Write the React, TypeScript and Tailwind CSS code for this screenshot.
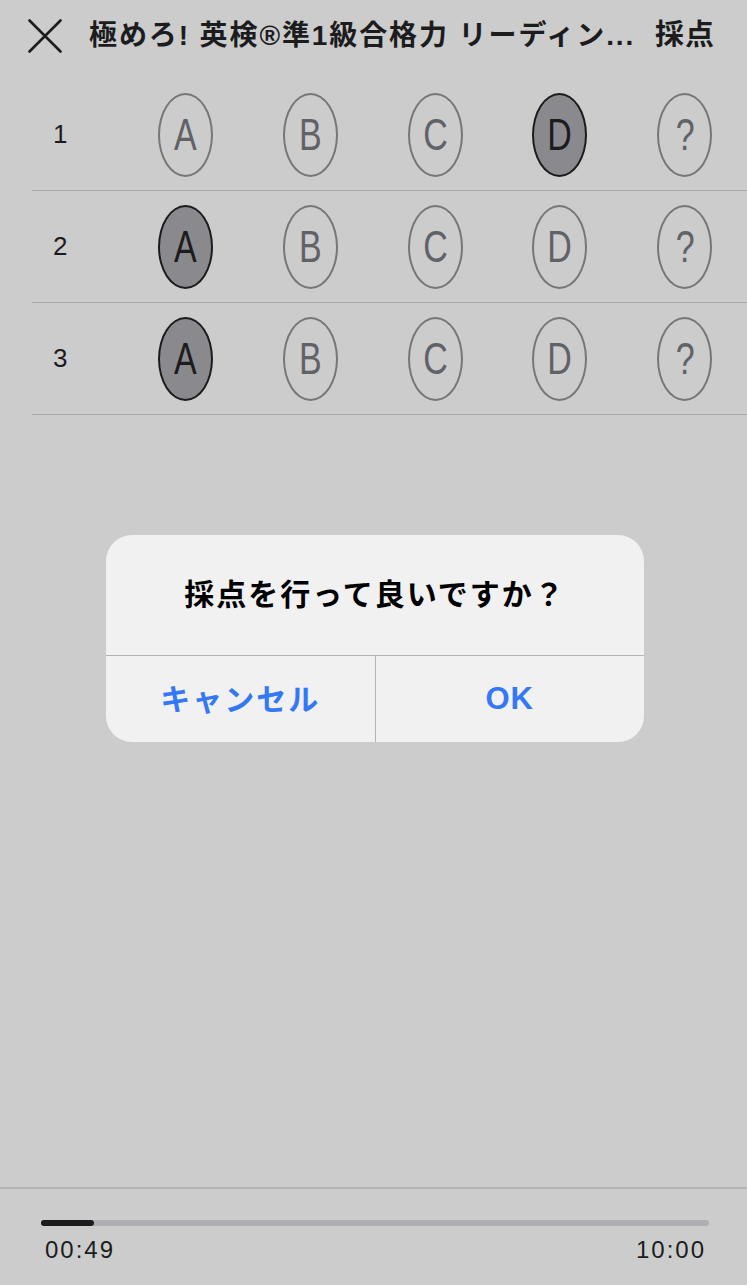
const rows: { n: number; pick: string }[] = [
  { n: 1, pick: "D" },
  { n: 2, pick: "A" },
  { n: 3, pick: "A" },
];

const choices = ["A", "B", "C", "D", "?"];

function Bubble({ label, on }: { label: string; on: boolean }) {
  return (
    <div
      className={
        on
          ? "flex h-[84px] w-[55px] items-center justify-center rounded-[50%] border-2 border-[#1c1c1e] bg-[#8a8a8e] text-[#1c1c1e]"
          : "flex h-[84px] w-[55px] items-center justify-center rounded-[50%] border-2 border-[#76767b] text-[#616168]"
      }
    >
      <span className="scale-x-85 scale-y-110 text-[40px] leading-none">{label}</span>
    </div>
  );
}

export default function App() {
  return (
    <div
      className="relative flex h-[1285px] w-[747px] flex-col overflow-hidden bg-[#cccccc] text-[#1c1c1e]"
      style={{ fontFamily: '"Liberation Sans", "Noto Sans CJK JP", sans-serif' }}
    >
      {/* Header */}
      <div className="flex h-[72px] items-center pl-[28px] pr-[32px]">
        <svg width="34" height="34" viewBox="0 0 34 34" className="shrink-0">
          <path d="M1.5 1.5 L32.5 32.5 M32.5 1.5 L1.5 32.5" stroke="#1c1c1e" strokeWidth="2.6" strokeLinecap="round" />
        </svg>
        <p className="ml-[27px] flex-1 whitespace-nowrap text-[28px] font-bold tracking-[1.9px]">
          極めろ! 英検®準1級合格力 リーディン...
        </p>
        <p className="text-[29px] font-bold tracking-[1px]">採点</p>
      </div>

      {/* Answer sheet */}
      <div className="mt-[7px] pl-[32px]">
        {rows.map((r) => (
          <div key={r.n} className="flex h-[112px] items-center border-b border-[#a8a8a8]">
            <div className="ml-[1px] w-[60px] text-center text-[26px]">{r.n}</div>
            <div className="ml-[36px] flex">
              {choices.map((c) => (
                <div key={c} className="flex w-[124.75px] shrink-0 justify-center">
                  <Bubble label={c} on={r.pick === c} />
                </div>
              ))}
            </div>
          </div>
        ))}
      </div>

      <div className="flex-1" />

      {/* Timer */}
      <div className="h-[98px] border-t-2 border-[#b5b5b5] pl-[41px] pr-[38px] pt-[31px]">
        <div className="h-[6px] rounded-full bg-[#afaeb3]">
          <div className="h-[6px] w-[53px] rounded-full bg-[#1c1c1e]" />
        </div>
        <div className="mt-[10px] flex justify-between pl-[4px] pr-[3px] text-[24px] leading-[28px] tracking-[2px]">
          <span>00:49</span>
          <span>10:00</span>
        </div>
      </div>

      {/* Confirm dialog */}
      <div className="absolute left-[106px] top-[535px] flex h-[207px] w-[538px] flex-col overflow-hidden rounded-[26px] bg-[#f1f1f1]">
        <div className="flex h-[120px] items-start justify-center pt-[40px]">
          <p className="text-[30px] font-bold leading-[40px] tracking-[2px] text-black">採点を行って良いですか？</p>
        </div>
        <div className="flex flex-1 border-t border-[#b3b3b3]">
          <button className="flex-1 border-r border-[#b3b3b3] text-[30px] font-bold tracking-[2px] text-[#3478f6]">キャンセル</button>
          <button className="flex-1 text-[31px] font-bold tracking-[1px] text-[#3478f6]">OK</button>
        </div>
      </div>
    </div>
  );
}
